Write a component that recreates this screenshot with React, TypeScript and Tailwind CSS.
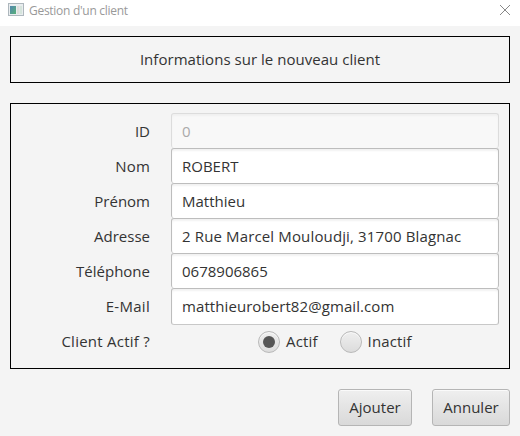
const fields = [
  { label: 'ID', value: '0', disabled: true, h: 'h-[35px]', lt: '', vt: '' },
  { label: 'Nom', value: 'ROBERT', h: 'h-[35px]', lt: 'tracking-[0.2px]', vt: '' },
  { label: 'Prénom', value: 'Matthieu', h: 'h-[35px]', lt: '', vt: '' },
  { label: 'Adresse', value: '2 Rue Marcel Mouloudji, 31700 Blagnac', h: 'h-[35px]', lt: '', vt: 'tracking-[0.14px]' },
  { label: 'Téléphone', value: '0678906865', h: 'h-[35px]', lt: '', vt: '' },
  { label: 'E-Mail', value: 'matthieurobert82@gmail.com', h: 'h-[37px]', lt: 'tracking-[0.3px]', vt: 'tracking-[0.08px]' },
];

function Radio({ label, checked }: { label: string; checked?: boolean }) {
  return (
    <span className="flex items-center gap-[6px]">
      <span className="flex size-[22px] items-center justify-center rounded-full border border-[#b9b9b9] bg-linear-to-b from-[#efefef] to-[#dcdcdc] shadow-[inset_0_1px_0_#fafafa]">
        {checked && <span className="size-3 rounded-full bg-[#555]" />}
      </span>
      <span className="pb-0.5 tracking-[0.15px]">{label}</span>
    </span>
  );
}

function Button({ label, width }: { label: string; width: string }) {
  return (
    <button className={`${width} h-[37px] rounded-[3px] border border-[#b5b5b5] bg-linear-to-b from-[#efefef] to-[#d9d9d9] pb-px text-center shadow-[inset_0_1px_0_#fafafa]`}>
      {label}
    </button>
  );
}

export default function App() {
  return (
    <div className="h-[436px] w-[520px] overflow-hidden bg-[#f4f4f4] font-['Open_Sans','Noto_Sans',sans-serif] text-[15px] leading-5 whitespace-nowrap text-[#333]">
      <header className="flex h-[26px] items-start bg-white pr-[10px] pl-2 text-[12px] text-[#999]">
        <svg className="mt-[3px]" width="16" height="14" viewBox="0 0 16 14">
          <defs>
            <linearGradient id="pane" x1="0" y1="0" x2="1" y2="1">
              <stop offset="0" stopColor="#5386b0" />
              <stop offset="1" stopColor="#58b178" />
            </linearGradient>
          </defs>
          <rect x=".5" y=".5" width="15" height="12" fill="#e9edef" stroke="#aeb7bd" />
          <rect x="2" y="3" width="6" height="8" fill="url(#pane)" />
          <rect x="9" y="3" width="2.5" height="8" fill="#dededb" />
          <rect x="12" y="3" width="2" height="8" fill="#d5e4dc" />
        </svg>
        <span className="ml-[5px] pt-px tracking-[-0.28px]">Gestion d'un client</span>
        <svg className="mt-[5px] ml-auto" width="10" height="10" viewBox="0 0 10 10" stroke="#888" strokeWidth="1">
          <path d="M0 0L10 10M10 0L0 10" />
        </svg>
      </header>
      <main className="px-[10px] pt-[10px]">
        <h1 className="flex h-[47px] items-center justify-center border border-black pb-0.5">
          <span className="tracking-[0.03px]">Informations sur le nouveau client</span>
        </h1>
        <section className="mt-5 h-[266px] border border-black pt-[9px]">
          {fields.map((f) => (
            <div key={f.label} className={`${f.h} flex`}>
              <span className={`w-[139px] pt-2 text-right ${f.lt}`}>{f.label}</span>
              <div
                className={`ml-[21px] w-[328px] rounded-[3px] border pt-[7px] pl-[10px] ${
                  f.disabled
                    ? 'border-[#dcdcdc] bg-[#f8f8f8] text-[#aaa] shadow-[inset_0_2px_2px_#f0f0f0]'
                    : 'border-[#bdbdbd] border-b-[#c8c8c8] bg-white shadow-[inset_0_2px_2px_#f2f2f2]'
                } ${f.h === 'h-[35px]' ? 'border-b-0' : ''}`}
              >
                <span className={f.vt}>{f.value}</span>
              </div>
            </div>
          ))}
          <div className="mt-[6px] flex items-center">
            <span className="w-[139px] pb-0.5 text-right tracking-[0.25px]">Client Actif ?</span>
            <div className="ml-[108px] flex gap-[22px]">
              <Radio label="Actif" checked />
              <Radio label="Inactif" />
            </div>
          </div>
        </section>
        <footer className="mt-5 flex justify-end gap-5">
          <Button label="Ajouter" width="w-[74px]" />
          <Button label="Annuler" width="w-[78px]" />
        </footer>
      </main>
    </div>
  );
}
